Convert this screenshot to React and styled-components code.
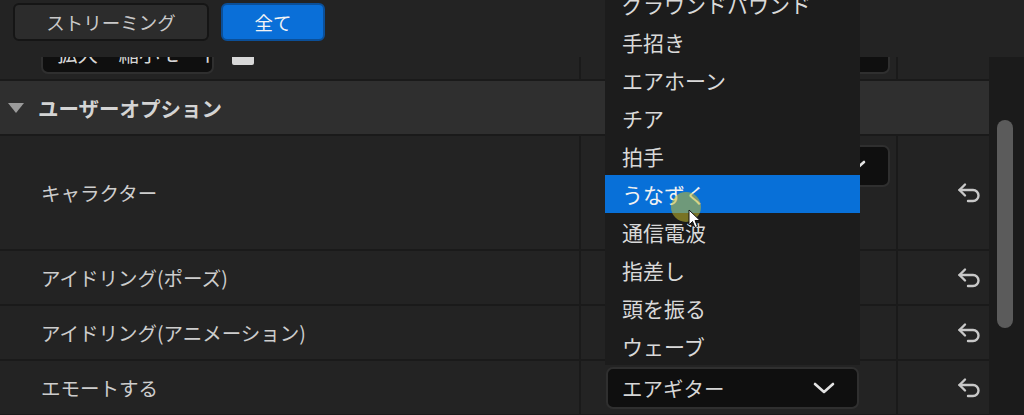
import styled, { createGlobalStyle } from 'styled-components'

const Global = createGlobalStyle`
    html, body {
        margin: 0;
        padding: 0;
        background: #232323;
    }
    * {
        box-sizing: border-box;
    }
`;

const Page = styled.div`
    position: relative;
    width: 1024px;
    height: 415px;
    overflow: hidden;
    background: #232323;
    font-family: "Noto Sans CJK JP", "Noto Sans", sans-serif;
    color: #d2d2d2;
`;

const Header = styled.div`
    position: relative;
    z-index: 2;
    height: 57px;
    display: flex;
    align-items: flex-start;
    gap: 12px;
    padding: 3px 0 0 13px;
    background: #232323;
`;

const TabButton = styled.button`
    height: 38px;
    width: ${props => props.width}px;
    border-radius: 6px;
    border: 2px solid ${props => props.active ? '#0b4f98' : '#151515'};
    background: ${props => props.active ? '#0a6fd8' : '#2c2c2c'};
    color: ${props => props.active ? '#f4f4f4' : '#c9c9c9'};
    font-family: inherit;
    font-size: 18.5px;
    line-height: 1;
    padding: 0;
`;

const Body = styled.div`
    display: flex;
    height: 358px;
`;

const Panel = styled.div`
    flex: 1;
    overflow: hidden;
`;

const Scroller = styled.div`
    margin-top: -31px;
`;

const Row = styled.div`
    display: flex;
    height: ${props => props.height || 55}px;
    border-bottom: 2px solid #1a1a1a;
`;

const LabelCell = styled.div`
    width: 581px;
    border-right: 2px solid #1a1a1a;
    display: flex;
    align-items: center;
    gap: 18px;
    padding-left: ${props => props.pad || 41}px;
    font-size: 19.5px;
    color: #cdcdcd;
`;

const ValueCell = styled.div`
    width: 317px;
    border-right: 2px solid #1a1a1a;
    display: flex;
    align-items: ${props => props.top ? 'flex-start' : 'center'};
    padding: ${props => props.top ? '9px' : '0'} 0 0 25px;
`;

const ResetCell = styled.div`
    flex: 1;
    display: flex;
    align-items: center;
    justify-content: flex-end;
    padding-right: 6px;
    color: #c8c8c8;
`;

const SectionHeader = styled.div`
    height: 55px;
    border-bottom: 2px solid #1a1a1a;
    background: #2f2f2f;
    display: flex;
    align-items: center;
    gap: 14px;
    padding-left: 8px;
    font-size: 20.5px;
    font-weight: 700;
    color: #d4d4d4;
`;

const Triangle = styled.span`
    width: 0;
    height: 0;
    border-left: 8px solid transparent;
    border-right: 8px solid transparent;
    border-top: 10px solid #9b9b9b;
`;

const Select = styled.div`
    width: ${props => props.width}px;
    height: 42px;
    flex: none;
    border-radius: 7px;
    border: 2px solid #2f2f2f;
    background: #0f0f0f;
    display: flex;
    align-items: center;
    justify-content: space-between;
    padding: 0 22px 0 14px;
    font-size: 20.5px;
    color: #d6d6d6;
    white-space: nowrap;
    overflow: hidden;
`;

const SmallIcon = styled.span`
    width: 22px;
    height: 10px;
    margin-top: 14px;
    border-radius: 2px;
    background: #d8d8d8;
`;

const Track = styled.div`
    width: 35px;
    background: #1b1b1b;
    padding: 63px 0 0 8px;
`;

const Thumb = styled.div`
    width: 16px;
    height: 208px;
    border-radius: 8px;
    background: #5b5b5b;
`;

const Dropdown = styled.ul`
    position: absolute;
    z-index: 3;
    left: 605px;
    top: -15px;
    width: 255px;
    margin: 0;
    padding: 0;
    list-style: none;
    background: #1c1c1c;
`;

const Item = styled.li`
    height: 38px;
    display: flex;
    align-items: center;
    padding-left: 17px;
    font-size: 21px;
    color: ${props => props.active ? '#f2f2f2' : '#d9d9d9'};
    background: ${props => props.active ? '#0870d8' : 'transparent'};
`;

const Cursor = styled.div`
    position: absolute;
    z-index: 4;
    left: 671px;
    top: 192px;
    width: 30px;
    height: 30px;
`;

const Halo = styled.span`
    position: absolute;
    inset: 0;
    border-radius: 50%;
    background: rgba(196, 188, 46, 0.55);
`;

const Pointer = styled.svg`
    position: absolute;
    left: 17px;
    top: 17px;
`;

const Chevron = () => (
    <svg width="22" height="12" viewBox="0 0 22 12">
        <path d="M2 2 L11 10 L20 2" fill="none" stroke="#e2e2e2" strokeWidth="2.6" strokeLinecap="round" strokeLinejoin="round" />
    </svg>
);

const ResetIcon = () => (
    <svg width="26" height="21" viewBox="0 0 26 21">
        <path d="M8 2.5 L2.5 8 L8 13.5" fill="none" stroke="currentColor" strokeWidth="2.4" strokeLinecap="round" strokeLinejoin="round" />
        <path d="M2.5 8 H16 a5.5 5.5 0 0 1 0 11 H11" fill="none" stroke="currentColor" strokeWidth="2.4" strokeLinecap="round" strokeLinejoin="round" />
    </svg>
);

const emotes = [
    'グラウンドパウンド', '手招き', 'エアホーン', 'チア', '拍手',
    'うなずく', '通信電波', '指差し', '頭を振る', 'ウェーブ',
];

const rows = [
    { label: 'アイドリング(ポーズ)' },
    { label: 'アイドリング(アニメーション)' },
];

const App = () => {
    return (
        <Page>
            <Global />
            <Header>
                <TabButton width={196}>ストリーミング</TabButton>
                <TabButton width={104} active>全て</TabButton>
            </Header>
            <Body>
                <Panel>
                    <Scroller>
                        <Row>
                            <LabelCell>
                                <Select width={173}>拡大・縮小モード</Select>
                                <SmallIcon />
                            </LabelCell>
                            <ValueCell>
                                <Select width={284} />
                            </ValueCell>
                            <ResetCell />
                        </Row>
                        <SectionHeader>
                            <Triangle />
                            ユーザーオプション
                        </SectionHeader>
                        <Row height={115}>
                            <LabelCell>キャラクター</LabelCell>
                            <ValueCell top>
                                <Select width={284}>
                                    <span />
                                    <Chevron />
                                </Select>
                            </ValueCell>
                            <ResetCell><ResetIcon /></ResetCell>
                        </Row>
                        {rows.map(r => (
                            <Row key={r.label}>
                                <LabelCell>{r.label}</LabelCell>
                                <ValueCell />
                                <ResetCell><ResetIcon /></ResetCell>
                            </Row>
                        ))}
                        <Row>
                            <LabelCell>エモートする</LabelCell>
                            <ValueCell>
                                <Select width={253}>
                                    エアギター
                                    <Chevron />
                                </Select>
                            </ValueCell>
                            <ResetCell><ResetIcon /></ResetCell>
                        </Row>
                    </Scroller>
                </Panel>
                <Track>
                    <Thumb />
                </Track>
            </Body>
            <Dropdown>
                {emotes.map(e => (
                    <Item key={e} active={e === 'うなずく'}>{e}</Item>
                ))}
            </Dropdown>
            <Cursor>
                <Halo />
                <Pointer width="14" height="20" viewBox="0 0 14 20">
                    <path d="M1 1 L1 16 L4.5 12.5 L7 18.5 L9.5 17.5 L7 11.5 L12 11.5 Z" fill="#ffffff" stroke="#111" strokeWidth="1" strokeLinejoin="round" />
                </Pointer>
            </Cursor>
        </Page>
    )
}

export default App
